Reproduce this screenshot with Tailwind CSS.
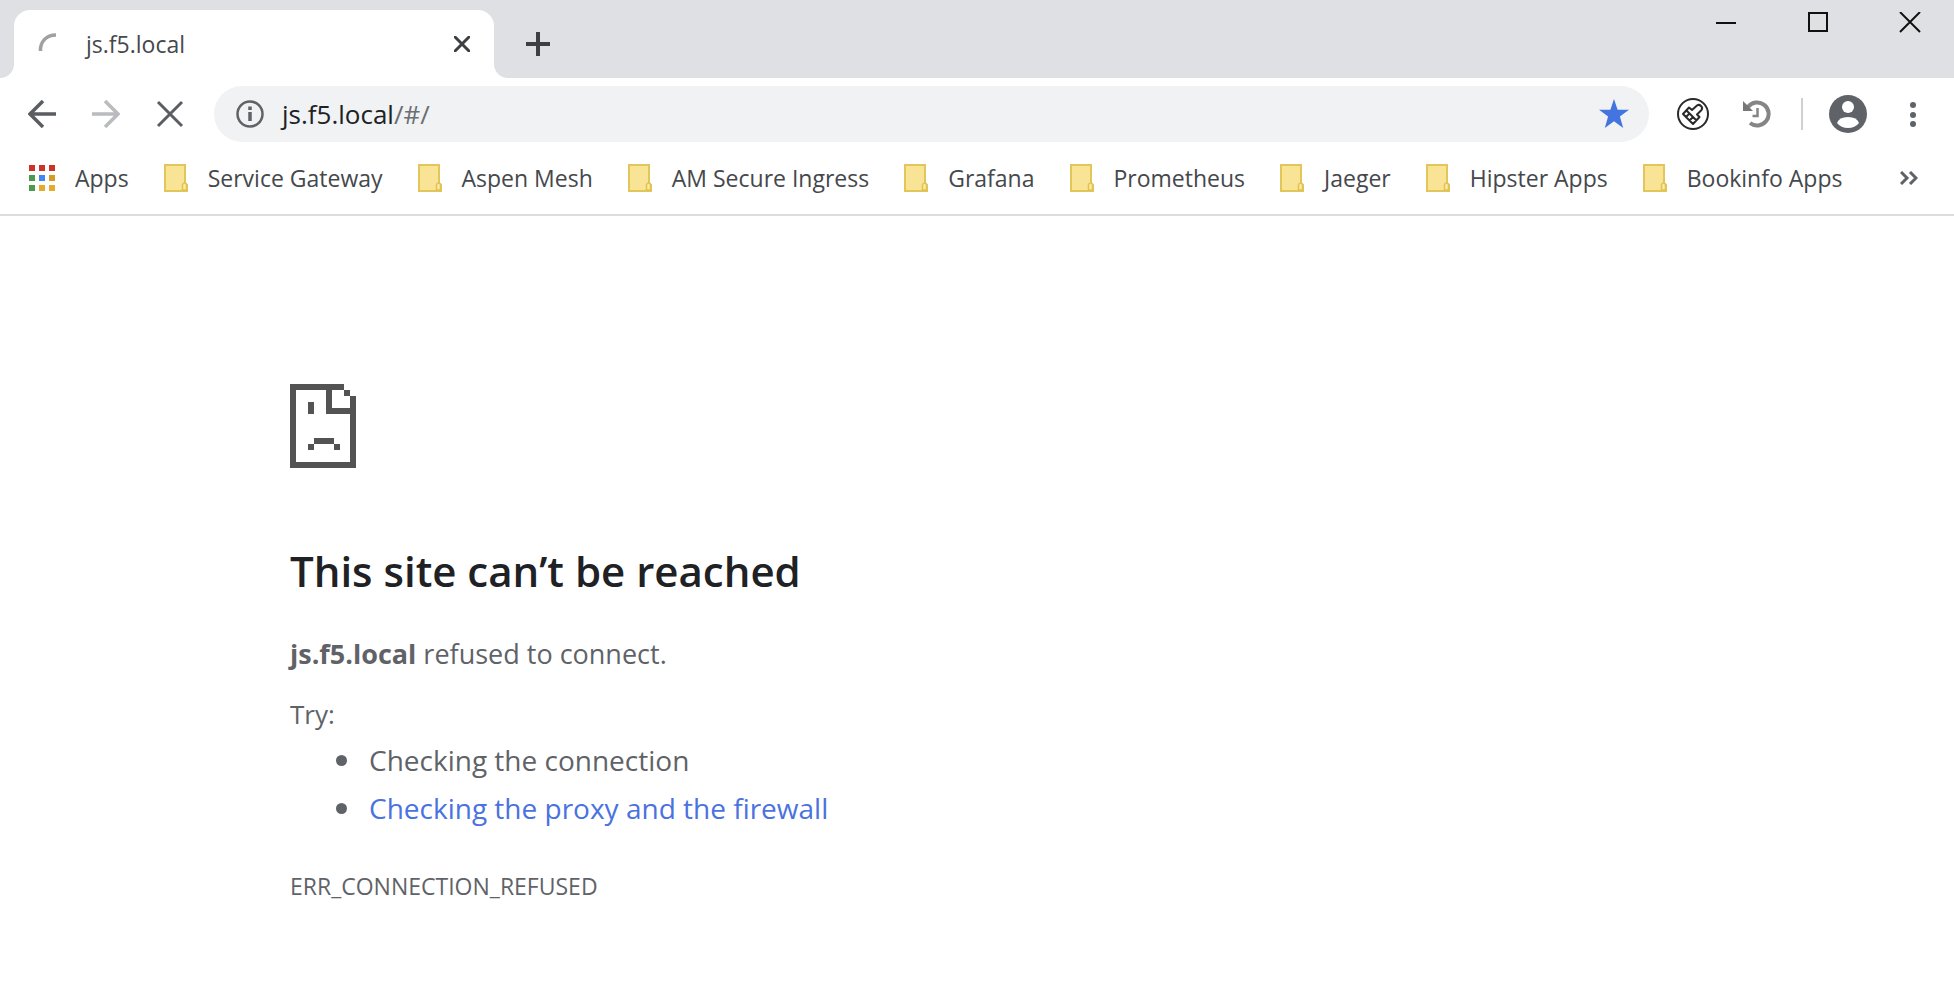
<!DOCTYPE html>
<html lang="en">
<head>
<meta charset="utf-8">
<title>js.f5.local</title>
<script src="https://cdn.jsdelivr.net/npm/@tailwindcss/browser@4"></script>
</head>
<body class="min-h-screen bg-white font-['Open_Sans','Noto_Sans',sans-serif] text-[#5f6368]">
<svg class="hidden" aria-hidden="true">
  <symbol id="folder" viewBox="0 0 24 28">
    <path d="M1 1H21V19L23 21V27H1Z" fill="#f9e495" stroke="#e2c65a" stroke-width="2"/>
    <path d="M18.500 26V20.500Q20.500 17.500 22.500 20.500V26Z" fill="#fbe9a4" stroke="#e0c352" stroke-width="1.500"/>
  </symbol>
</svg>

<header class="border-b-2 border-[#dcdde0]">
  <div class="flex h-[78px] items-start justify-between bg-[#dee0e4]">
    <div class="flex h-full items-end">
      <svg class="h-3.5 w-3.5 text-white" viewBox="0 0 14 14" aria-hidden="true"><path d="M14 0V14H0A14 14 0 0 0 14 0Z" fill="currentColor"/></svg>
      <div class="flex h-[68px] w-[480px] items-center rounded-t-2xl bg-white pr-5 pl-6">
        <svg class="h-6 w-6" viewBox="0 0 24 24" fill="none" stroke="#a0a0a0" stroke-width="3.500" aria-label="Loading"><path d="M2.500 19C2 10 8 3 18 3"/></svg>
        <span class="ml-6 flex-1 text-[23px] leading-8 text-[#45484c]">js.f5.local</span>
        <button type="button" aria-label="Close tab" class="p-1"><svg class="h-4 w-4" viewBox="0 0 16 16" stroke="#3c4043" stroke-width="3"><path d="M0 0L16 16M16 0L0 16"/></svg></button>
      </div>
      <svg class="h-3.5 w-3.5 text-white" viewBox="0 0 14 14" aria-hidden="true"><path d="M0 0V14H14A14 14 0 0 1 0 0Z" fill="currentColor"/></svg>
      <button type="button" aria-label="New tab" class="mb-[22px] ml-[18px]"><svg class="h-6 w-6" viewBox="0 0 24 24" stroke="#3c4043" stroke-width="4"><path d="M12 0V24M0 12H24"/></svg></button>
    </div>
    <div class="flex gap-[70px] pt-3 pr-[33px]">
      <button type="button" aria-label="Minimize"><svg class="h-[22px] w-[22px]" viewBox="0 0 22 22" stroke="#111" stroke-width="2"><path d="M1 11H21"/></svg></button>
      <button type="button" aria-label="Maximize"><svg class="h-[22px] w-[22px]" viewBox="0 0 22 22" stroke="#111" fill="none" stroke-width="2"><path d="M2 1H20V19H2Z"/></svg></button>
      <button type="button" aria-label="Close"><svg class="h-[22px] w-[22px]" viewBox="0 0 22 22" stroke="#111" stroke-width="2"><path d="M1 0L21 20M21 0L1 20"/></svg></button>
    </div>
  </div>

  <div class="flex items-center pt-2 pr-[38px] pl-7">
    <div class="flex gap-9">
      <button type="button" aria-label="Back"><svg class="h-7 w-7" viewBox="0 0 28 28" fill="none" stroke="#5a5d62" stroke-width="3.500"><path d="M28 14H2M15 1L2 14L15 27"/></svg></button>
      <button type="button" aria-label="Forward"><svg class="h-7 w-7" viewBox="0 0 28 28" fill="none" stroke="#b9bbbe" stroke-width="3.500"><path d="M0 14H26M13 1L26 14L13 27"/></svg></button>
      <button type="button" aria-label="Stop loading"><svg class="h-7 w-7" viewBox="0 0 28 28" fill="none" stroke="#5a5d62" stroke-width="3"><path d="M2 2L26 26M26 2L2 26"/></svg></button>
    </div>
    <div class="ml-[30px] flex h-14 flex-1 items-center rounded-full bg-[#f1f2f4] pr-5 pl-[22px]">
      <svg class="h-[28px] w-[28px]" viewBox="0 0 28 28" fill="none" stroke="#5f6368" stroke-width="2.500"><circle cx="14" cy="14" r="12.500"/><path d="M14 12V21M14 6.500V10" stroke-width="3.500"/></svg>
      <div contenteditable="true" role="textbox" aria-label="Address" class="ml-[18px] flex-1 text-[26px] leading-9 text-[#6b6e73]"><span class="text-[#202124]">js.f5.local</span>/#/</div>
      <button type="button" aria-label="Edit bookmark"><svg class="h-[30px] w-[30px]" viewBox="0 0 30 30" fill="#4374e0"><path d="M15 0L18.600 10.700H30L20.900 17.500L24.200 29L15 22.200L5.800 29L9.100 17.500L0 10.700H11.400Z"/></svg></button>
    </div>
    <button type="button" aria-label="Cleaner extension" class="ml-7"><svg class="h-8 w-8" viewBox="0 0 32 32" fill="none" stroke="#2a2a2a" stroke-width="2"><circle cx="16" cy="16" r="15"/><path stroke-linejoin="round" d="M6 16L12 9.500L15 12L20 7.500Q22 6 24 8T24.500 12L20 16.500L22.500 19L16 26ZM9.500 12.500L19.500 22.500M9 19L12.500 15.500M12.500 22.500L16 19"/></svg></button>
    <button type="button" aria-label="History extension" class="ml-[34px]"><svg class="h-7 w-7" viewBox="0 0 28 28" fill="none" stroke="#858585" stroke-width="4"><path d="M5 7A11.500 11.500 0 1 1 7 23"/><path d="M14.500 8V16H9.500" stroke-width="2.500"/><path d="M0 1V11H10Z" fill="#777" stroke="none"/></svg></button>
    <span class="mr-[26px] ml-[30px] h-8 w-0.5 bg-[#cfd0d2]"></span>
    <button type="button" aria-label="Profile"><svg class="h-[38px] w-[38px]" viewBox="0 0 38 38"><circle cx="19" cy="19" r="19" fill="#5f6368"/><circle cx="19" cy="12" r="6" fill="#fff"/><path d="M8 28Q10 22 19 22T30 28Q26 33 19 33T8 28Z" fill="#fff"/></svg></button>
    <button type="button" aria-label="Menu" class="ml-[43px]"><svg class="h-[26px] w-1.5" viewBox="0 0 6 26" fill="#5f6368"><circle cx="3" cy="4" r="3"/><circle cx="3" cy="14" r="3"/><circle cx="3" cy="23" r="3"/></svg></button>
  </div>

  <nav aria-label="Bookmarks" class="flex h-[72px] items-center gap-[35px] pr-9 pl-[29px] text-[23px] leading-8 whitespace-nowrap text-[#45484c]">
    <a href="#" class="flex items-center gap-5"><svg class="h-[26px] w-[26px]" viewBox="0 0 26 26"><path d="M0 0h6v6H0zM10 0h6v6h-6zM20 0h6v6h-6z" fill="#cf3128"/><path d="M0 10h6v6H0zM0 20h6v6H0z" fill="#4b9a4f"/><path d="M10 10h6v6h-6z" fill="#4285f4"/><path d="M20 10h6v6h-6z" fill="#d69b27"/><path d="M10 20h6v6h-6zM20 20h6v6h-6z" fill="#e5ab2e"/></svg>Apps</a>
    <a href="#" class="flex items-center gap-5"><svg class="h-7 w-6"><use href="#folder"/></svg>Service Gateway</a>
    <a href="#" class="flex items-center gap-5"><svg class="h-7 w-6"><use href="#folder"/></svg>Aspen Mesh</a>
    <a href="#" class="flex items-center gap-5"><svg class="h-7 w-6"><use href="#folder"/></svg>AM Secure Ingress</a>
    <a href="#" class="flex items-center gap-5"><svg class="h-7 w-6"><use href="#folder"/></svg>Grafana</a>
    <a href="#" class="flex items-center gap-5"><svg class="h-7 w-6"><use href="#folder"/></svg>Prometheus</a>
    <a href="#" class="flex items-center gap-5"><svg class="h-7 w-6"><use href="#folder"/></svg>Jaeger</a>
    <a href="#" class="flex items-center gap-5"><svg class="h-7 w-6"><use href="#folder"/></svg>Hipster Apps</a>
    <a href="#" class="flex items-center gap-5"><svg class="h-7 w-6"><use href="#folder"/></svg>Bookinfo Apps</a>
    <button type="button" aria-label="More bookmarks" class="ml-auto"><svg class="h-3.5 w-[18px]" viewBox="0 0 18 14" fill="none" stroke="#5f6368" stroke-width="3"><path d="M1 1L7 7L1 13M10 1L16 7L10 13"/></svg></button>
  </nav>
</header>

<main class="px-[290px] pt-[168px] pb-20">
  <svg class="h-[84px] w-[66px]" viewBox="0 0 11 14" fill="#535353" shape-rendering="crispEdges" aria-hidden="true">
    <path d="M0 0H9V1H7V4H10V2H11V14H0ZM1 1V13H10V5H6V1ZM9 1H10V2H9ZM3 3H4V5H3ZM4 9H7.300V10H4ZM3 10H4V11H3ZM7.300 10H8.300V11H7.300Z" fill-rule="evenodd"/>
  </svg>
  <h1 class="mt-[72px] text-[42px] leading-[62px] font-semibold text-[#202124]">This site can’t be reached</h1>
  <p class="mt-[34px] text-[27px] leading-9"><strong class="font-bold">js.f5.local</strong> refused to connect.</p>
  <p class="mt-6 text-[26px] leading-9">Try:</p>
  <ul class="mt-1 pl-[46px] text-[28px] leading-[48px]">
    <li class="flex items-center gap-[22px] before:size-[11px] before:rounded-full before:bg-[#5f6368] before:content-['']">Checking the connection</li>
    <li class="flex items-center gap-[22px] before:size-[11px] before:rounded-full before:bg-[#5f6368] before:content-['']"><a href="#" class="text-[#4a72e0]">Checking the proxy and the firewall</a></li>
  </ul>
  <p class="mt-[34px] text-[23px] leading-10">ERR_CONNECTION_REFUSED</p>
</main>
</body>
</html>
